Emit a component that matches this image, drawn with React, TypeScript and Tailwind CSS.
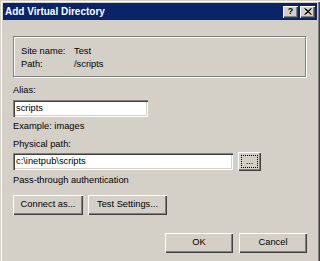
import React from 'react';

const raised =
  'bg-[#d4d0c8] shadow-[inset_1px_1px_0_#ffffff,inset_-1px_-1px_0_#404040,inset_-2px_-2px_0_#808080]';
const sunken =
  'bg-white shadow-[inset_1px_1px_0_#808080,inset_2px_2px_0_#404040,inset_-1px_-1px_0_#ffffff,inset_-2px_-2px_0_#d4d0c8]';

function Field({ value, width }: { value: string; width: string }) {
  return (
    <div className={`${sunken} ${width} h-[17px] flex items-center pl-[3px] leading-none`}>
      {value}
    </div>
  );
}

function Button({ label, width }: { label: string; width: string }) {
  return (
    <div className={`${raised} ${width} h-[20px] flex items-center justify-center leading-none`}>
      {label}
    </div>
  );
}

export default function App() {
  return (
    <div
      className="w-[320px] h-[261px] overflow-hidden text-[9.3px] text-black"
      style={{ fontFamily: '"Liberation Sans", Arial, sans-serif' }}
    >
      <div className="h-[266px] flex flex-col bg-[#d4d0c8] pt-[3px] px-[3px] shadow-[inset_1px_1px_0_#d4d0c8,inset_2px_2px_0_#ffffff,inset_-1px_-1px_0_#404040,inset_-2px_-2px_0_#808080]">
        {/* title bar */}
        <div className="h-[17px] bg-[#0a246a] flex items-center justify-between pl-[2px] pr-[2px]">
          <span className="text-white font-bold text-[10px] leading-none">Add Virtual Directory</span>
          <div className="flex gap-[2px]">
            <div className={`${raised} w-[15px] h-[12px] flex items-center justify-center text-[9px] font-bold leading-none`}>
              ?
            </div>
            <div className={`${raised} w-[15px] h-[12px] flex items-center justify-center`}>
              <svg width="8" height="7" viewBox="0 0 8 7">
                <path d="M0.5 0.5 L7 6.5 M1.5 0.5 L7.5 6.5 M7 0.5 L0.5 6.5 M7.5 0.5 L1.5 6.5" stroke="#000" strokeWidth="1" />
              </svg>
            </div>
          </div>
        </div>

        <div className="flex flex-col px-[10px]">
          {/* info group */}
          <div className="mt-[16px] h-[41px] border border-[#808080] shadow-[1px_1px_0_#ffffff,inset_1px_1px_0_#ffffff] pl-[7px] pt-[8px] mr-[1px]">
            <div className="flex h-[13px] items-center">
              <span className="w-[53px]">Site name:</span>
              <span>Test</span>
            </div>
            <div className="flex h-[13px] items-center">
              <span className="w-[53px]">Path:</span>
              <span>/scripts</span>
            </div>
          </div>

          <div className="mt-[8px] h-[12px] flex items-center">Alias:</div>
          <div className="mt-[3px]">
            <Field value="scripts" width="w-[135px]" />
          </div>
          <div className="mt-[4px] h-[12px] flex items-center">Example: images</div>

          <div className="mt-[6px] h-[12px] flex items-center">Physical path:</div>
          <div className="mt-[1px] flex items-center gap-[5px]">
            <Field value="c:\inetpub\scripts" width="w-[220px]" />
            <div className={`${raised} w-[23px] h-[19px] p-[3px]`}>
              <div className="w-full h-full border border-dotted border-black flex items-end justify-center leading-none pb-[1px]">
                ...
              </div>
            </div>
          </div>
          <div className="mt-[4px] h-[12px] flex items-center">Pass-through authentication</div>

          <div className="mt-[8px] flex gap-[5px]">
            <Button label="Connect as..." width="w-[70px]" />
            <Button label="Test Settings..." width="w-[79px]" />
          </div>

          <div className="mt-[18px] flex justify-end gap-[6px] pr-[-1px]">
            <Button label="OK" width="w-[68px]" />
            <Button label="Cancel" width="w-[68px]" />
          </div>
        </div>
      </div>
    </div>
  );
}
